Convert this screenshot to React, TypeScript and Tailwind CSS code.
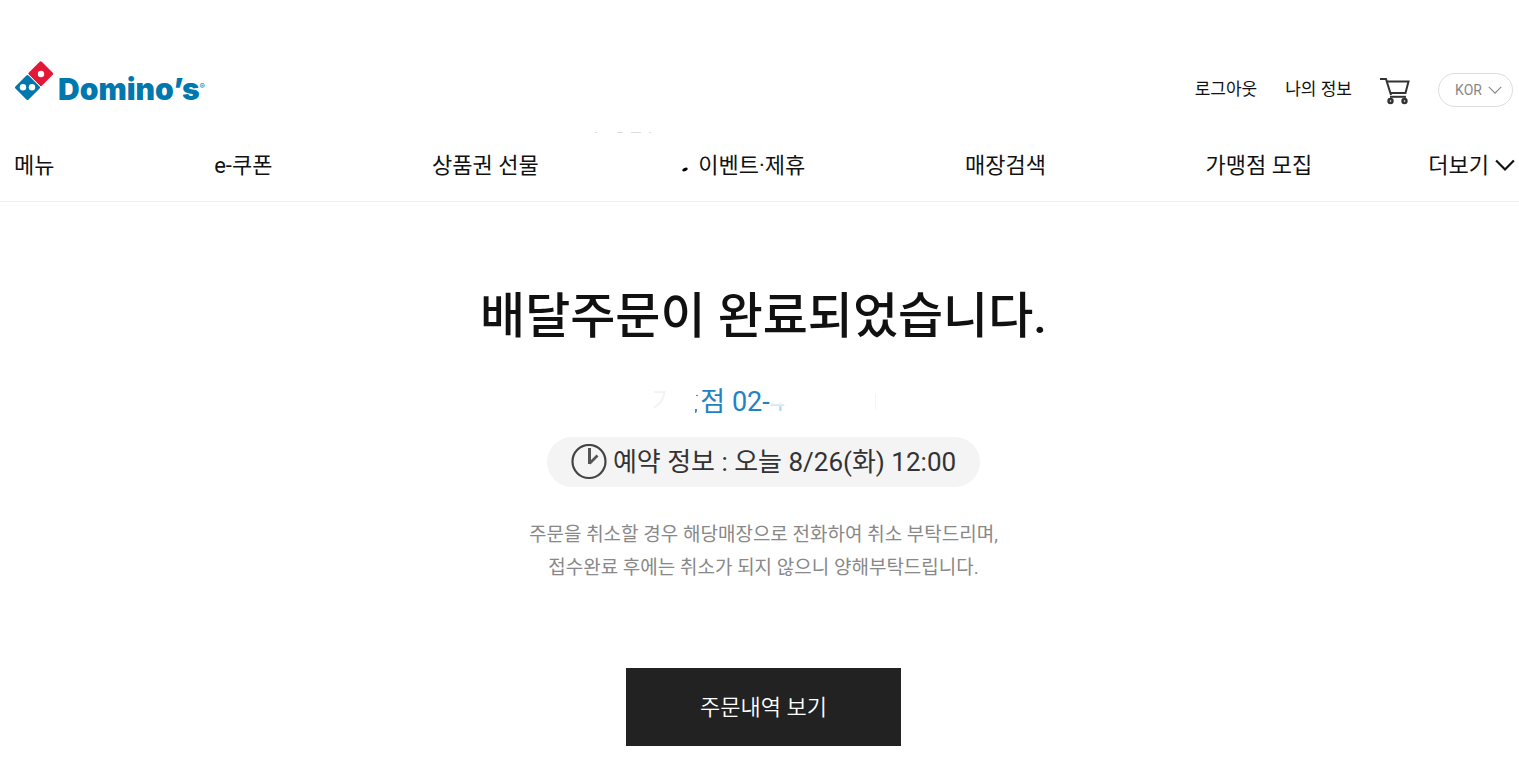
const MENU_ITEMS = ["메뉴", "e-쿠폰", "상품권 선물", "이벤트·제휴", "매장검색", "가맹점 모집"];

function Logo() {
  return (
    <a href="#" aria-label="Domino's" className="flex items-start">
      <svg width="42" height="42" viewBox="0 0 42 42" aria-hidden="true">
        <rect x="4.200" y="18.200" width="18.600" height="18.600" rx="1.500" transform="rotate(45 13.500 27.500)" fill="#0078ae" />
        <rect x="17.500" y="4.500" width="18.500" height="18.500" rx="1.500" transform="rotate(45 26.750 13.750)" fill="#e31837" />
        <path d="M13.500 13.500 27.500 27.500" stroke="#fff" strokeWidth="0.800" />
        <circle cx="27" cy="14" r="3.200" fill="#fff" />
        <circle cx="9" cy="27.200" r="3.200" fill="#fff" />
        <circle cx="18" cy="27.200" r="3.200" fill="#fff" />
      </svg>
      <span className="mt-2 ml-0.5 font-[Inter,sans-serif] text-[30px] leading-[42px] font-black text-[#0078ae]">Domino’s</span>
      <span className="mt-5 font-[Inter,sans-serif] text-[8px] text-[#0078ae]">®</span>
    </a>
  );
}

function CartIcon() {
  return (
    <svg width="30" height="28" viewBox="0 0 30 28" fill="none" stroke="#333" strokeWidth="2" aria-hidden="true">
      <path d="M0 2h6l5 16" />
      <path d="M7 4.500h21.500l-3 11.500H10.500" />
      <path d="M10 19.800h16" />
      <circle cx="10.500" cy="24" r="2" strokeWidth="2.400" />
      <circle cx="24.500" cy="24" r="2" strokeWidth="2.400" />
    </svg>
  );
}

function ClockIcon() {
  return (
    <svg width="36" height="36" viewBox="0 0 36 36" fill="none" stroke="#444" aria-hidden="true">
      <circle cx="18" cy="17.500" r="16.500" strokeWidth="2.200" />
      <path d="M18.500 4v16" strokeWidth="3" stroke="#555" />
      <path d="M18.500 19.500l8-8" strokeWidth="2.600" stroke="#555" />
    </svg>
  );
}

function Chevron({ className }: { className: string }) {
  return (
    <svg viewBox="0 0 18 12" fill="none" stroke="currentColor" className={className} aria-hidden="true">
      <path d="M1 2l8 8 8-8" />
    </svg>
  );
}

export default function App() {
  return (
    <div className="bg-white font-[Roboto,'Noto_Sans_CJK_KR',sans-serif] text-[#111]">
      <header className="border-b border-[#eee] pt-15">
        <div className="flex h-15 items-start justify-between pr-1.5 pl-3.5">
          <Logo />
          <div className="flex h-15 items-center text-[17px]">
            <a href="#">로그아웃</a>
            <a href="#" className="ml-7">나의 정보</a>
            <a href="#" aria-label="장바구니" className="mt-0.5 ml-7">
              <CartIcon />
            </a>
            <button className="ml-7 flex h-[34px] w-[75px] items-center justify-center gap-1.5 rounded-full border border-[#ddd] pl-1.5 text-sm text-[#888]">
              KOR
              <Chevron className="h-2.5 w-3.5 stroke-[1.5]" />
            </button>
          </div>
        </div>
        {/* edge of the closed sub menu */}
        <div className="mt-3 flex h-px gap-2 pl-[595px]">
          <i className="w-0.5 bg-[#ddd]" />
          <i className="ml-3 w-1.5 bg-[#ddd]" />
          <i className="w-2.5 bg-[#ddd]" />
          <i className="w-0.5 bg-[#ddd]" />
        </div>
        <nav className="flex h-17 items-center pr-1 pb-1 pl-3.5 text-[22px]">
          <div className="flex flex-1 justify-between">
            {MENU_ITEMS.map((item) => (
              <a key={item} href="#" className="relative">
                {item === "이벤트·제휴" && (
                  <svg width="6" height="5" viewBox="0 0 6 5" className="absolute top-[18px] -left-4" aria-hidden="true">
                    <ellipse cx="3" cy="2.500" rx="2.800" ry="1.600" transform="rotate(-20 3 2.500)" />
                  </svg>
                )}
                {item}
              </a>
            ))}
          </div>
          <button className="ml-29 flex items-center gap-1.5">
            더보기
            <Chevron className="h-3.5 w-5 stroke-2" />
          </button>
        </nav>
      </header>

      <main className="flex flex-col items-center pt-[81px] pl-2 text-center">
        <h1 className="text-[49px] leading-[68px] font-medium">배달주문이 완료되었습니다.</h1>
        <p className="mt-[31px] flex w-56 text-[27px] leading-10 text-[#2283c4]">
          <span className="bg-linear-to-r from-[#f0f4f7] from-60% to-white to-65% bg-clip-text text-transparent">가</span>
          <svg width="6" height="24" viewBox="0 0 6 24" className="mt-2 ml-4" aria-hidden="true">
            <path d="M3 19h2v2l-1 2H3zM4 5h2v1H4z" fill="#3d8fc6" />
          </svg>
          <span className="ml-0.5">점 02-</span>
          <span className="bg-linear-to-b from-white from-50% to-[#b5d7ec] to-65% bg-clip-text text-transparent">4</span>
          <span className="mt-3 ml-auto h-4 w-px bg-[#f1f5f8]" />
        </p>
        <p className="mt-[15px] flex h-[50px] items-center gap-1.5 rounded-full bg-[#f4f4f4] px-6 text-[26px] text-[#333]">
          <ClockIcon />
          예약 정보 : 오늘 8/26(화) 12:00
        </p>
        <p className="mt-[31px] text-[19px] leading-[33px] text-[#888]">
          주문을 취소할 경우 해당매장으로 전화하여 취소 부탁드리며,
          <br />
          접수완료 후에는 취소가 되지 않으니 양해부탁드립니다.
        </p>
        <button className="mt-[84px] h-[78px] w-[275px] bg-[#222] text-[22px] font-[350] text-white">주문내역 보기</button>
      </main>
    </div>
  );
}
